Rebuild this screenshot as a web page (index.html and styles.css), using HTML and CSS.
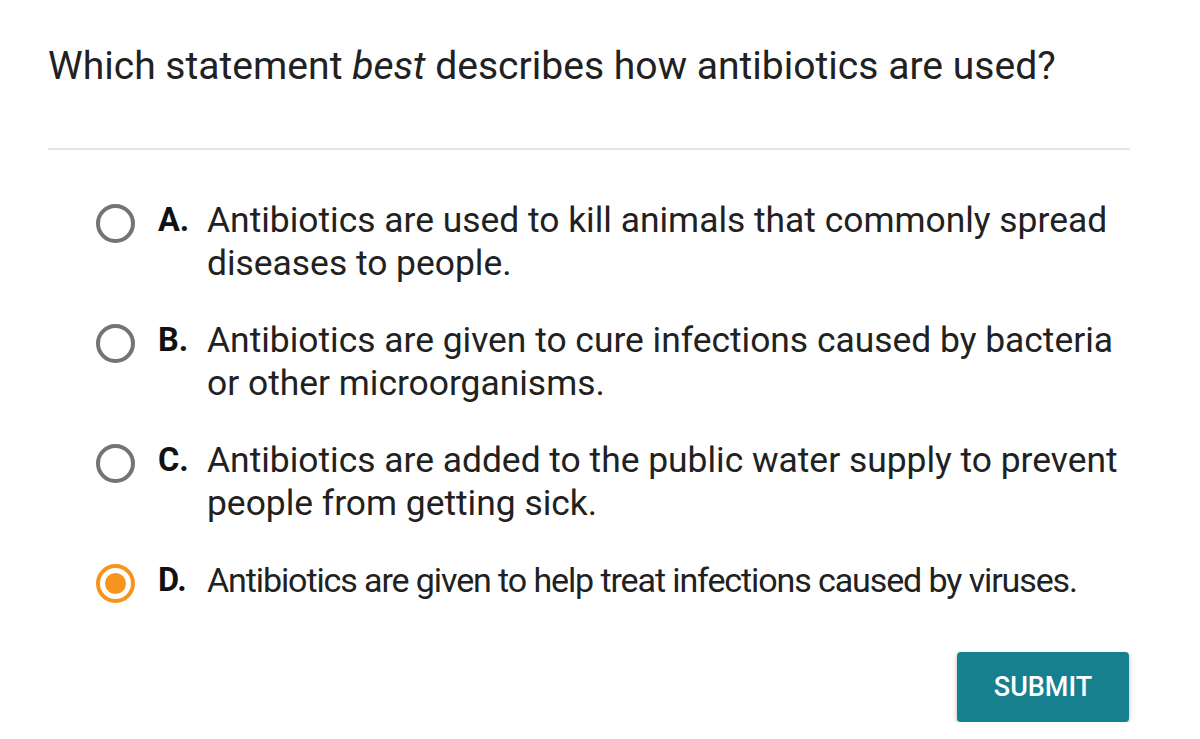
FILE: index.html
```html
<!DOCTYPE html>
<html>
<head>
<meta charset="utf-8">
<link rel="stylesheet" href="styles.css">
</head>
<body>
<div class="page">
  <h1 class="question">Which statement <em>best</em> describes how antibiotics are used?</h1>
  <hr class="divider">
  <ul class="options">
    <li class="option">
      <span class="radio"></span>
      <span class="letter">A.</span>
      <span class="text">Antibiotics are used to kill animals that commonly spread diseases to people.</span>
    </li>
    <li class="option">
      <span class="radio"></span>
      <span class="letter">B.</span>
      <span class="text">Antibiotics are given to cure infections caused by bacteria or other microorganisms.</span>
    </li>
    <li class="option">
      <span class="radio"></span>
      <span class="letter">C.</span>
      <span class="text">Antibiotics are added to the public water supply to prevent people from getting sick.</span>
    </li>
    <li class="option selected">
      <span class="radio"></span>
      <span class="letter">D.</span>
      <span class="text">Antibiotics are given to help treat infections caused by viruses.</span>
    </li>
  </ul>
  <div class="actions">
    <button class="submit">SUBMIT</button>
  </div>
</div>
</body>
</html>
```

FILE: styles.css
```css
html, body {
  margin: 0;
  padding: 0;
  background: #ffffff;
}
body {
  font-family: Roboto, "Liberation Sans", sans-serif;
  color: #212121;
}
.page {
  padding: 42px 70px 0 48px;
}
.question {
  margin: 0;
  font-size: 39.1px;
  font-weight: 400;
  line-height: 48px;
  color: #212121;
}
.question em {
  font-style: italic;
}
.divider {
  border: 0;
  height: 2px;
  background: #e6e6e6;
  margin: 58px 0 0 0;
}
.options {
  list-style: none;
  margin: 0;
  padding: 0 0 0 48px;
}
.option {
  display: flex;
  align-items: flex-start;
  margin-top: 34px;
  font-size: 35.4px;
  line-height: 43px;
}
.options .option:first-child {
  margin-top: 49px;
}
.radio {
  flex: none;
  width: 31px;
  height: 31px;
  border: 4px solid #747474;
  border-radius: 50%;
  margin-top: 5px;
  box-sizing: content-box;
  position: relative;
}
.option.selected .radio {
  border-color: #f7941d;
}
.option.selected .radio::after {
  content: "";
  position: absolute;
  left: 5px;
  top: 5px;
  width: 21px;
  height: 21px;
  border-radius: 50%;
  background: #f7941d;
}
.letter {
  flex: none;
  width: 49px;
  margin-left: 23px;
  font-size: 32.5px;
  font-weight: 700;
  color: #111111;
}
.text {
  color: #212121;
}
.option.selected .text {
  font-size: 34px;
  letter-spacing: -1.1px;
}
.actions {
  display: flex;
  justify-content: flex-end;
  margin-top: 49px;
}
.submit {
  width: 172px;
  height: 70px;
  border: 0;
  border-radius: 4px;
  background: #16808f;
  color: #ffffff;
  font-family: Roboto, "Liberation Sans", sans-serif;
  font-size: 27px;
  font-weight: 500;
  box-shadow: 0 2px 4px rgba(0,0,0,0.3);
  margin-right: 1px;
}
```
